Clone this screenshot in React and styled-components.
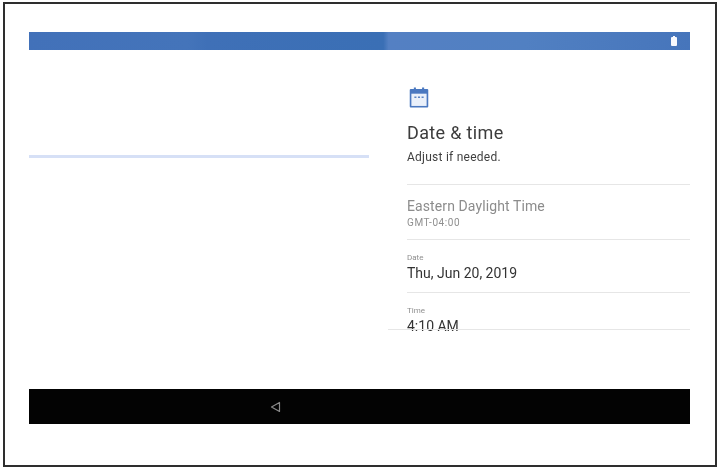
import React from "react";
import styled, { createGlobalStyle } from "styled-components";

const GlobalStyle = createGlobalStyle`
    html, body {
        margin: 0;
        padding: 0;
        background: #ffffff;
    }
    body {
        width: 720px;
        height: 470px;
        overflow: hidden;
        font-family: Roboto, "Liberation Sans", sans-serif;
    }
`;

// the source is a soft, rescaled photo of a tablet screen
const Frame = styled.div`
    box-sizing: border-box;
    width: 714px;
    height: 465px;
    margin: 2px 0 0 3px;
    padding: 28px 25px 41px 24px;
    border: 2px solid #2e2e2e;
    display: flex;
    flex-direction: column;
    filter: blur(0.4px);
`;

const StatusBar = styled.div`
    flex: none;
    height: 18px;
    padding-right: 13px;
    display: flex;
    align-items: center;
    justify-content: flex-end;
    background: linear-gradient(
        90deg,
        #4271b9 0%,
        #4474ba 24%,
        #3f70b7 27%,
        #3a6fb5 53.6%,
        #5480c3 54.4%,
        #5180c2 75%,
        #4675bb 100%
    );
`;

const Battery = styled.span`
    position: relative;
    width: 6px;
    height: 9px;
    border-radius: 1px;
    background: #f8f9fd;

    &::before {
        content: "";
        position: absolute;
        top: -1px;
        left: 2px;
        width: 2px;
        height: 1px;
        background: #f8f9fd;
    }
`;

const Content = styled.main`
    flex: 1;
    min-height: 0;
    display: flex;
`;

const ProgressPane = styled.section`
    flex: none;
    width: 340px;
    padding-top: 105px;
`;

const ProgressLine = styled.div`
    height: 3px;
    background: #d6e0f6;
`;

const SetupPane = styled.section`
    margin-left: 19px;
    flex: 1;
    min-width: 0;
    padding-top: 37px;
    display: flex;
    flex-direction: column;
`;

const Header = styled.header`
    flex: none;
    padding-left: 19px;
`;

const CalendarIcon = styled.svg`
    display: block;
    width: 20px;
    height: 21px;
    margin-left: 2px;
`;

const Title = styled.h1`
    margin: 14px 0 0;
    font-size: 18px;
    line-height: 22px;
    font-weight: 400;
    letter-spacing: 0.35px;
    color: #3c3c3c;
`;

const Subtitle = styled.p`
    margin: 5px 0 0;
    font-size: 12px;
    line-height: 16px;
    letter-spacing: 0.25px;
    color: #3f3f3f;
`;

const SettingsList = styled.div`
    flex: none;
    height: 146px;
    margin-top: 19px;
    margin-left: 19px;
    margin-bottom: -2px;
    overflow: hidden;
    border-top: 1px solid #e6e6e6;
`;

const Row = styled.div`
    box-sizing: border-box;
    height: ${({ $height }) => $height}px;
    padding-top: ${({ $top }) => $top}px;
    border-bottom: 1px solid #e6e6e6;
`;

const SmallText = styled.div`
    margin-top: ${({ $gap }) => $gap || 0}px;
    font-size: ${({ $size }) => $size}px;
    line-height: 12px;
    letter-spacing: ${({ $spacing }) => $spacing || 0}px;
    color: #8f8f8f;
`;

const ZoneName = styled.div`
    font-size: 14px;
    line-height: 18px;
    letter-spacing: 0.1px;
    color: #8c8c8c;
`;

const Value = styled.div`
    font-size: 14px;
    line-height: 18px;
    color: #333333;
`;

const ListEnd = styled.div`
    position: relative;
    flex: none;
    height: 1px;
    background: #e6e6e6;
`;

const NavBar = styled.nav`
    flex: none;
    height: 35px;
    padding-left: 241px;
    display: flex;
    align-items: center;
    background: #030303;
`;

const BackIcon = styled.svg`
    display: block;
    width: 12px;
    height: 12px;
`;

export default function App() {
    return (
        <>
            <GlobalStyle />
            <Frame>
                <StatusBar>
                    <Battery />
                </StatusBar>
                <Content>
                    <ProgressPane>
                        <ProgressLine />
                    </ProgressPane>
                    <SetupPane>
                        <Header>
                            <CalendarIcon viewBox="3 2 18 20.4" fill="none">
                                <path d="M4 4h3V2.5h2V4h6V2.5h2V4h3a1 1 0 0 1 1 1v16a1 1 0 0 1-1 1H4a1 1 0 0 1-1-1V5a1 1 0 0 1 1-1z" fill="#4a78c0" />
                                <rect x="4.6" y="8.5" width="14.8" height="11.9" fill="#eaf0fa" />
                                <path d="M7.5 12h2M11 12h2M14.5 12h2" stroke="#5b84c4" strokeWidth="1.6" />
                            </CalendarIcon>
                            <Title>Date &amp; time</Title>
                            <Subtitle>Adjust if needed.</Subtitle>
                        </Header>
                        <SettingsList>
                            <Row $height={55} $top={12}>
                                <ZoneName>Eastern Daylight Time</ZoneName>
                                <SmallText $size={10} $gap={2} $spacing={0.6}>GMT-04:00</SmallText>
                            </Row>
                            <Row $height={53} $top={12}>
                                <SmallText $size={8}>Date</SmallText>
                                <Value>Thu, Jun 20, 2019</Value>
                            </Row>
                            <Row $height={53} $top={12}>
                                <SmallText $size={8}>Time</SmallText>
                                <Value>4:10 AM</Value>
                            </Row>
                        </SettingsList>
                        <ListEnd />
                    </SetupPane>
                </Content>
                <NavBar>
                    <BackIcon viewBox="0 0 12 12" fill="none">
                        <path d="M1.5 6 9.5 1.5v9z" stroke="#8a8a8a" strokeWidth="1.2" strokeLinejoin="round" />
                    </BackIcon>
                </NavBar>
            </Frame>
        </>
    );
}
